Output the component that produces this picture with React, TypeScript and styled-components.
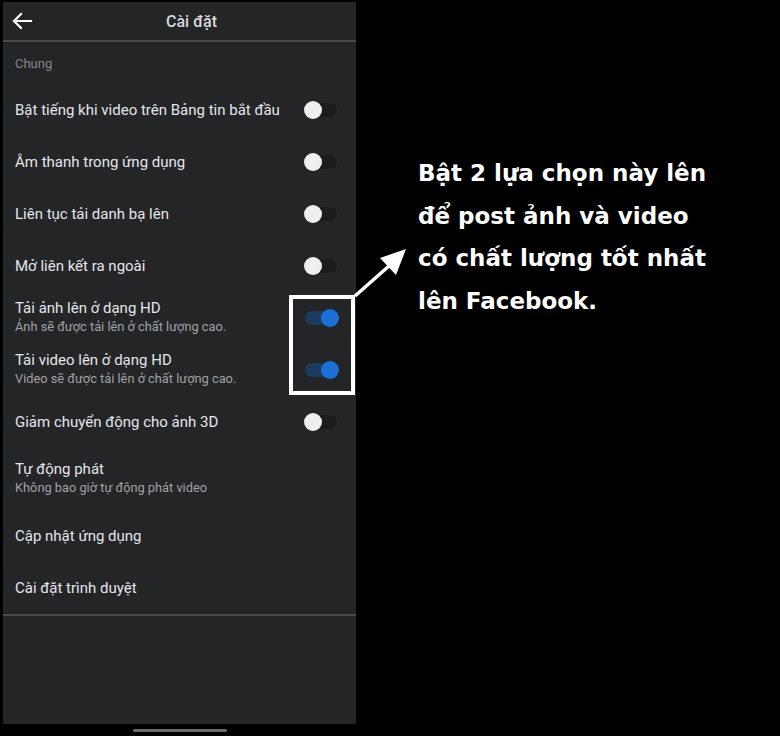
import React from "react";
import styled, { createGlobalStyle } from "styled-components";

const Global = createGlobalStyle`
  html, body { margin: 0; padding: 0; background: #000; }
  body { font-family: Roboto, "Noto Sans", sans-serif; }
`;

const Page = styled.div`
  position: relative;
  width: 780px;
  height: 736px;
  background: #000;
  display: flex;
  overflow: hidden;
`;

const PhoneCol = styled.div`
  display: flex;
  flex-direction: column;
  align-items: center;
  padding: 2px 0 0 3px;
  width: 353px;
`;

const Phone = styled.div`
  width: 353px;
  height: 722px;
  background: #242526;
  display: flex;
  flex-direction: column;
`;

const HomeBar = styled.div`
  margin-top: 5px;
  width: 94px;
  height: 3px;
  border-radius: 2px;
  background: #6a6a6a;
`;

const Header = styled.div`
  height: 38px;
  display: flex;
  align-items: center;
  justify-content: center;
  position: relative;
  border-bottom: 2px solid #48494a;
`;

const Back = styled.div`
  position: absolute;
  left: 8px;
  top: 8px;
  width: 22px;
  height: 22px;
`;

const Title = styled.div`
  color: #d8d9dc;
  font-size: 16px;
  font-weight: 500;
  margin-left: 24px;
`;

const Section = styled.div`
  height: 41px;
  display: flex;
  align-items: center;
  padding-left: 12px;
  padding-top: 1px;
  color: #85868a;
  font-size: 13px;
`;

const Row = styled.div<{ $h?: number }>`
  height: ${(p) => p.$h ?? 52}px;
  display: flex;
  align-items: center;
  padding: 0 19px 0 12px;
`;

const Texts = styled.div<{ $two?: boolean }>`
  flex: 1;
  display: flex;
  flex-direction: column;
  gap: 2px;
  padding-top: ${(p) => (p.$two ? 0 : 1)}px;
  margin-top: ${(p) => (p.$two ? -2 : 0)}px;
`;

const Label = styled.div`
  color: #e4e6eb;
  font-size: 15px;
  line-height: 17px;
`;

const Sub = styled.div`
  color: #a0a2a6;
  font-size: 12.8px;
  line-height: 15px;
`;

const Track = styled.div<{ $on?: boolean }>`
  position: relative;
  width: 32px;
  height: 14px;
  border-radius: 7px;
  background: ${(p) => (p.$on ? "#1d3a5f" : "#1b1c1d")};
`;

const Knob = styled.div<{ $on?: boolean }>`
  position: absolute;
  top: -2px;
  ${(p) => (p.$on ? "right: -2px;" : "left: -1px;")}
  width: 18px;
  height: 18px;
  border-radius: 50%;
  background: ${(p) => (p.$on ? "#1b6fd6" : "#eeeff1")};
`;

const Divider = styled.div`
  height: 2px;
  background: #48494a;
`;

const Note = styled.div`
  padding: 152px 0 0 62px;
  color: #fff;
  font-family: "DejaVu Sans", sans-serif;
  font-weight: bold;
  font-size: 23px;
  line-height: 42.5px;
  white-space: nowrap;
`;

const Box = styled.div`
  position: absolute;
  left: 289px;
  top: 295px;
  width: 58px;
  height: 92px;
  border: 4px solid #fff;
`;

const ArrowSvg = styled.svg`
  position: absolute;
  left: 340px;
  top: 240px;
`;

const Toggle = ({ on }: { on?: boolean }) => (
  <Track $on={on}>
    <Knob $on={on} />
  </Track>
);

export default function App() {
  return (
    <Page>
      <Global />
      <PhoneCol>
        <Phone>
          <Header>
            <Back>
              <svg width="22" height="22" viewBox="0 0 22 22" fill="none" stroke="#fff" strokeWidth="2.2" strokeLinecap="square">
                <path d="M3 11 H20 M3 11 L10 4 M3 11 L10 18" />
              </svg>
            </Back>
            <Title>Cài đặt</Title>
          </Header>
          <Section>Chung</Section>
          <Row>
            <Texts><Label>Bật tiếng khi video trên Bảng tin bắt đầu</Label></Texts>
            <Toggle />
          </Row>
          <Row>
            <Texts><Label>Âm thanh trong ứng dụng</Label></Texts>
            <Toggle />
          </Row>
          <Row>
            <Texts><Label>Liên tục tải danh bạ lên</Label></Texts>
            <Toggle />
          </Row>
          <Row>
            <Texts><Label>Mở liên kết ra ngoài</Label></Texts>
            <Toggle />
          </Row>
          <Row>
            <Texts $two>
              <Label>Tải ảnh lên ở dạng HD</Label>
              <Sub>Ảnh sẽ được tải lên ở chất lượng cao.</Sub>
            </Texts>
            <Toggle on />
          </Row>
          <Row>
            <Texts $two>
              <Label>Tải video lên ở dạng HD</Label>
              <Sub>Video sẽ được tải lên ở chất lượng cao.</Sub>
            </Texts>
            <Toggle on />
          </Row>
          <Row>
            <Texts><Label>Giảm chuyển động cho ảnh 3D</Label></Texts>
            <Toggle />
          </Row>
          <Row $h={62}>
            <Texts $two>
              <Label>Tự động phát</Label>
              <Sub>Không bao giờ tự động phát video</Sub>
            </Texts>
          </Row>
          <Row>
            <Texts><Label>Cập nhật ứng dụng</Label></Texts>
          </Row>
          <Row>
            <Texts><Label>Cài đặt trình duyệt</Label></Texts>
          </Row>
          <Divider />
        </Phone>
        <HomeBar />
      </PhoneCol>
      <Note>
        Bật 2 lựa chọn này lên<br />
        để post ảnh và video<br />
        có chất lượng tốt nhất<br />
        lên Facebook.
      </Note>
      <Box />
      <ArrowSvg width="80" height="70" viewBox="0 0 80 70">
        <line x1="15" y1="56" x2="58" y2="18" stroke="#fff" strokeWidth="3.5" />
        <polygon points="66,9 40,18 56,35" fill="#fff" />
      </ArrowSvg>
    </Page>
  );
}
